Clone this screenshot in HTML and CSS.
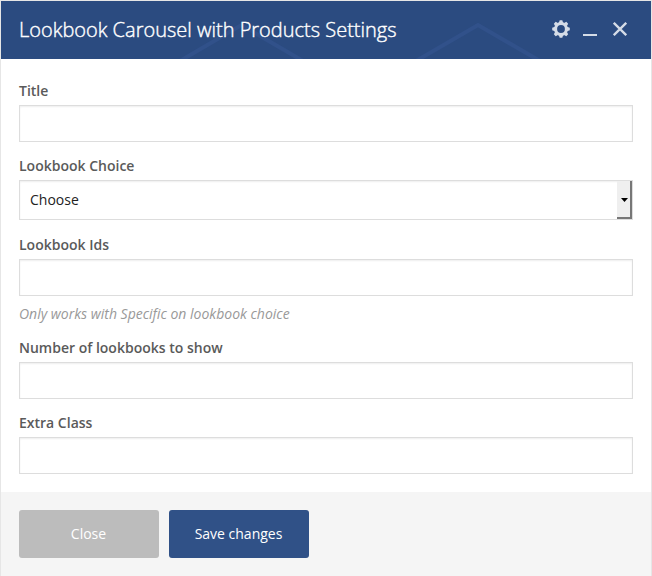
FILE: index.html
```html
<!DOCTYPE html>
<html lang="en">
<head>
<meta charset="utf-8">
<title>Lookbook Carousel with Products Settings</title>
<link rel="stylesheet" href="styles.css">
</head>
<body>
<form class="panel">
  <header class="panel-header">
    <svg class="pattern" width="650" height="58" viewBox="1 1 650 58" fill="none" stroke="#31518a" stroke-width="4" aria-hidden="true">
      <path d="M180 61 241.500 25 303 61M416 61 478 25 540 61"/>
    </svg>
    <h1 class="panel-title">Lookbook Carousel with Products Settings</h1>
    <div class="controls">
      <svg width="18" height="18" viewBox="-9 -9 18 18" aria-hidden="true">
        <circle r="5.400" fill="none" stroke="#d5dce7" stroke-width="3"/>
        <g fill="#d5dce7">
          <path id="tooth" d="M-2.200-6 -1.300-8.800H1.300L2.200-6ZM-2.200 6-1.300 8.800H1.300L2.200 6Z"/>
          <use href="#tooth" transform="rotate(45)"/>
          <use href="#tooth" transform="rotate(90)"/>
          <use href="#tooth" transform="rotate(135)"/>
        </g>
      </svg>
      <span class="minimize"></span>
      <svg width="14" height="14" viewBox="0 0 14 14" fill="none" stroke="#d5dce7" stroke-width="2.300" aria-hidden="true">
        <path d="M.8.8 13.200 13.200M13.200.8.8 13.200"/>
      </svg>
    </div>
  </header>
  <main class="fields">
    <div class="field">
      <label for="title">Title</label>
      <input id="title" type="text">
    </div>
    <div class="field field-select">
      <label for="choice">Lookbook Choice</label>
      <div class="select" id="choice"><span class="value">Choose</span><span class="drop"><svg width="7" height="4" viewBox="0 0 7 4" aria-hidden="true"><path d="M0 0H7L3.500 4Z"/></svg></span></div>
    </div>
    <div class="field">
      <label for="ids">Lookbook Ids</label>
      <input id="ids" type="text">
      <p class="hint">Only works with Specific on lookbook choice</p>
    </div>
    <div class="field">
      <label for="count">Number of lookbooks to show</label>
      <input id="count" type="text">
    </div>
    <div class="field">
      <label for="extra">Extra Class</label>
      <input id="extra" type="text">
    </div>
  </main>
  <footer class="panel-footer">
    <button class="button button-close" type="button">Close</button>
    <button class="button button-save" type="button">Save changes</button>
  </footer>
</form>
</body>
</html>
```
FILE: styles.css
```css
* {
  box-sizing: border-box;
}

body {
  margin: 0;
  background: #e6e6e6;
  font: 14px/20px "Open Sans", sans-serif;
  overflow: hidden;
}

.panel {
  display: flex;
  flex-direction: column;
  height: 576px;
  padding: 1px 1px 0;
}

.panel-header {
  position: relative;
  display: flex;
  align-items: center;
  justify-content: space-between;
  height: 58px;
  padding: 0 24px 0 18px;
  background: #2b4b80;
}

.pattern {
  position: absolute;
  inset: 0;
}

.panel-title {
  position: relative;
  margin: 0;
  color: #fff;
  font-size: 20px;
  font-weight: 300;
  line-height: 28px;
  -webkit-text-stroke: 0.4px #fff;
}

.controls {
  position: relative;
  display: flex;
  align-items: center;
  margin-bottom: 2px;
}

.minimize {
  width: 14px;
  height: 2px;
  margin: 12px 16px 0 13px;
  background: #d5dce7;
}

.fields {
  height: 433px;
  padding: 22px 18px 0;
  background: #fff;
}

.field {
  margin-bottom: 14px;
}

.field-select {
  margin-bottom: 15px;
}

label {
  display: block;
  margin-bottom: 4px;
  color: #5a5a5a;
  font-weight: 600;
}

input,
.select {
  display: block;
  width: 100%;
  height: 37px;
  margin: 0;
  border: 1px solid #ddd;
  background: #fff;
  box-shadow: inset 0 1px 2px rgba(0, 0, 0, 0.07);
}

.select {
  display: flex;
  height: 40px;
  color: #222;
}

.value {
  flex: 1;
  padding: 9px 10px;
}

.drop {
  display: flex;
  align-items: center;
  justify-content: center;
  width: 15px;
  padding: 2px 0 0 2px;
  border-right: 2px solid #777;
  border-bottom: 2px solid #777;
  background: #efefef;
}

.hint {
  margin: 8px 0 0;
  color: #999;
  font-style: italic;
}

.panel-footer {
  display: flex;
  flex: 1;
  align-items: flex-start;
  gap: 10px;
  padding: 18px;
  background: #f5f5f5;
}

.button {
  width: 140px;
  height: 48px;
  padding: 0 1px 0 0;
  border: 0;
  border-radius: 3px;
  color: #fff;
  font: inherit;
}

.button-close {
  background: #bcbcbc;
}

.button-save {
  background: #305187;
}
```
